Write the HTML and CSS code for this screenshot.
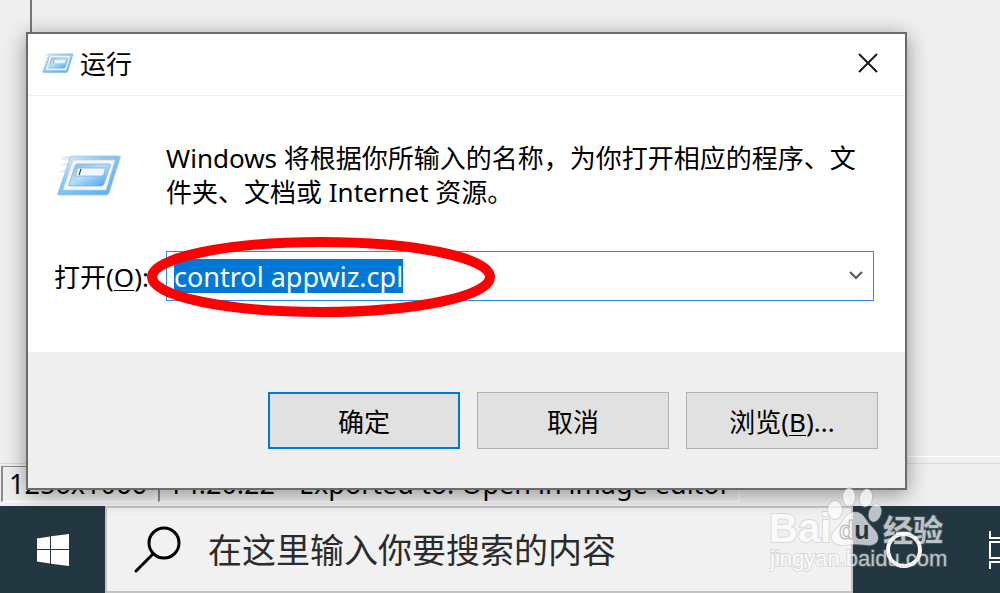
FILE: index.html
```
<!DOCTYPE html>
<html lang="zh-CN">
<head>
    <meta charset="UTF-8">
    <meta name="viewport" content="width=device-width, initial-scale=1.0">
    <title>运行</title>
    <link rel="stylesheet" href="styles.css">
</head>
<body>
    <svg class="defs" width="0" height="0" aria-hidden="true">
        <defs>
            <linearGradient id="frame" x1="0" y1="0" x2="1" y2="1">
                <stop offset="0" stop-color="#e3f1fc"/>
                <stop offset=".4" stop-color="#8ac5f3"/>
                <stop offset="1" stop-color="#5aaaf0"/>
            </linearGradient>
            <linearGradient id="panel" x1="0" y1="0" x2="1" y2="1">
                <stop offset="0" stop-color="#84b6e2"/>
                <stop offset=".45" stop-color="#b5def9"/>
                <stop offset="1" stop-color="#3d9fec"/>
            </linearGradient>
            <linearGradient id="trail" x1="0" y1="0" x2="1" y2="0">
                <stop offset="0" stop-color="#c4e0f8" stop-opacity="0"/>
                <stop offset="1" stop-color="#b4d8f5"/>
            </linearGradient>
            <symbol id="run" viewBox="0 0 66 46">
                <path fill="url(#trail)" d="M5 4h16l-2 4H5zM4 11h11l-1 3H4zM2 18h11l-1 3H2zM0 25h10l-1 3H0zM1 32h7l-1 3H1zM0 38h5l-1 3H0z"/>
                <path fill="url(#frame)" stroke="#9cc4e6" stroke-width=".8" d="M16 4h47q2 0 1 2L53 41q-1 2-3 2H3q-2 0-1-2L14 6q1-2 2-2z"/>
                <path fill="#f3f5f7" stroke="#c6d8e8" stroke-width=".7" d="M17 8h42L50 38H7z"/>
                <path fill="url(#panel)" stroke="#84b4de" stroke-width=".8" d="M21 12h32q2 0 1 2l-6 18q-1 2-3 2H14q-2 0-1-2l6-18q1-2 2-2z"/>
                <path fill="#eef8fe" stroke="#8eb2cc" stroke-width=".8" d="M23 16h25q2 0 1 2l-1 4q-1 2-3 2H21q-2 0-1-2l1-4q0-2 2-2z"/>
                <path stroke="#444" stroke-width="1.200" d="M25 17l-2 6"/>
            </symbol>
        </defs>
    </svg>

    <main class="desktop">
        <div class="app-window">
            <div class="app-canvas"></div>
            <div class="status-bar">
                <span class="status-cell size">1256x1066</span>
                <span class="status-cell"><span>14:20:22</span><span>Exported to: Open in image editor</span></span>
            </div>
        </div>

        <section class="dialog" role="dialog" aria-labelledby="run-title">
            <header class="title-bar">
                <svg class="title-icon" aria-hidden="true"><use href="#run"/></svg>
                <h1 id="run-title">运行</h1>
                <button class="close" aria-label="关闭">
                    <svg width="22" height="22" viewBox="0 0 22 22"><path d="M2 2l18 18M20 2L2 20"/></svg>
                </button>
            </header>
            <div class="dialog-body">
                <svg class="run-icon" aria-hidden="true"><use href="#run"/></svg>
                <p>Windows 将根据你所输入的名称，为你打开相应的程序、文件夹、文档或 Internet 资源。</p>
                <label for="command">打开(<u>O</u>):</label>
                <div class="combo">
                    <input id="command" type="text" value="control appwiz.cpl" size="17">
                    <button class="drop" aria-label="展开">
                        <svg width="16" height="10" viewBox="0 0 16 10"><path d="M2 1l6 6 6-6"/></svg>
                    </button>
                    <svg class="marker" viewBox="0 0 350 80" aria-hidden="true"><ellipse cx="175" cy="40" rx="169" ry="35"/></svg>
                </div>
            </div>
            <footer class="dialog-footer">
                <button class="btn default">确定</button>
                <button class="btn">取消</button>
                <button class="btn">浏览(<u>B</u>)...</button>
            </footer>
        </section>
    </main>

    <nav class="taskbar">
        <button class="start" aria-label="开始">
            <svg width="32" height="32" viewBox="0 0 32 32"><path d="M0 4.500l13-2V15H0zM14 2.300L32 0v15H14zM0 16h13v13.500l-13-2zM14 16h18v16l-18-2.300z"/></svg>
        </button>
        <div class="search">
            <svg width="48" height="48" viewBox="0 0 48 48" aria-hidden="true"><circle cx="31" cy="17" r="15"/><path d="M20 28L3 45"/></svg>
            <input type="text" aria-label="搜索" placeholder="在这里输入你要搜索的内容">
        </div>
        <div class="tray">
            <button class="cortana" aria-label="Cortana">
                <svg width="38" height="38" viewBox="0 0 38 38"><circle cx="19" cy="19" r="16"/></svg>
            </button>
            <button class="task-view" aria-label="任务视图">
                <svg width="36" height="38" viewBox="0 0 36 38"><path d="M1 0v7h26V0M1 11h26v16H1zM1 38v-7h26v7M34 0v38"/></svg>
            </button>
        </div>
    </nav>

    <svg class="watermark" width="184" height="94" viewBox="0 0 184 94">
        <g class="mark">
            <text class="brand" x="0" y="57">Bai</text>
            <ellipse cx="66" cy="25" rx="7" ry="9"/>
            <ellipse cx="80" cy="12" rx="6" ry="9"/>
            <ellipse cx="97" cy="13" rx="6" ry="9" transform="rotate(12 97 13)"/>
            <ellipse cx="106" cy="28" rx="6" ry="9" transform="rotate(18 106 28)"/>
            <path d="M86 27c8 0 10 7 15 13 5 5 8 8 8 13 0 6-6 8-12 7-8-1-15-1-22 0-7 0-12-2-12-8 0-5 4-7 8-12 5-6 7-13 15-13z"/>
            <text class="cn" x="114" y="56">经验</text>
            <text class="site" x="1" y="81">jingyan.baidu.com</text>
        </g>
        <text class="du" x="70" y="54"><tspan class="d">d</tspan><tspan class="u">u</tspan></text>
    </svg>
</body>
</html>
```
FILE: styles.css
```
* {
    box-sizing: border-box;
}

body {
    margin: 0;
    min-height: 100vh;
    display: flex;
    flex-direction: column;
    position: relative;
    overflow: hidden;
    background-color: #efefef;
    color: #000;
    font-family: "Noto Sans", "Noto Sans CJK SC", sans-serif;
    font-size: 26px;
}

button,
input {
    margin: 0;
    padding: 0;
    border: 0;
    background: none;
    color: inherit;
    font: inherit;
}

svg {
    display: block;
    flex: none;
}

u {
    text-decoration-thickness: 1px;
    text-underline-offset: 3px;
}

.defs {
    position: absolute;
}

.desktop {
    flex: 1;
    display: flex;
    position: relative;
}

/* window behind the dialog */
.app-window {
    flex: 1;
    display: flex;
    flex-direction: column;
}

.app-canvas {
    flex: 1;
    margin-left: 30px;
    border-left: 2px solid #777;
    border-bottom: 1px solid #fff;
}

.status-bar {
    display: flex;
    gap: 2px;
    margin-top: 6px;
    padding: 2px 1px 4px;
    border-top: 1px solid #dadada;
    font-size: 27px;
    line-height: 34px;
    white-space: nowrap;
}

.status-cell {
    display: flex;
    gap: 24px;
    padding: 0 8px;
    border: 1px solid #8a8a8a;
    border-left-width: 2px;
    border-right-color: #fff;
    border-bottom-color: #fff;
}

.status-cell.size {
    padding: 0 8px 0 6px;
}

/* run dialog */
.dialog {
    position: absolute;
    top: 32px;
    left: 26px;
    right: 93px;
    border: 2px solid #6b6b6b;
    background-color: #fff;
    box-shadow: 0 4px 20px rgba(0, 0, 0, 0.4);
}

.title-bar {
    display: flex;
    align-items: center;
    gap: 6px;
    height: 62px;
    padding: 0 26px 4px 14px;
    border-bottom: 1px solid #f0f0f0;
}

.title-icon {
    width: 32px;
    height: 24px;
}

.title-bar h1 {
    flex: 1;
    margin: 0;
    font-size: 26px;
    font-weight: 400;
}

.close svg {
    fill: none;
    stroke: #1a1a1a;
    stroke-width: 2;
}

.dialog-body {
    display: grid;
    grid-template-columns: 112px 1fr;
    row-gap: 42px;
    align-items: center;
    padding: 45px 31px 51px 26px;
}

.run-icon {
    width: 66px;
    height: 46px;
    margin-left: 2px;
}

.dialog-body p {
    margin: 0;
    line-height: 34px;
}

.dialog-body label {
    white-space: nowrap;
}

.combo {
    display: flex;
    align-items: center;
    justify-content: space-between;
    position: relative;
    height: 50px;
    padding: 0 9px 0 7px;
    border: 1px solid #2e8fe0;
}

.combo input {
    field-sizing: content;
    height: 34px;
    background-color: #0078d7;
    color: #fff;
    font-size: 27px;
    outline: none;
}

.drop svg {
    fill: none;
    stroke: #555;
    stroke-width: 2;
}

.marker {
    position: absolute;
    top: -15px;
    left: -21px;
    width: 350px;
    height: 80px;
    fill: none;
    stroke: #f00;
    stroke-width: 10;
    pointer-events: none;
}

.dialog-footer {
    display: flex;
    justify-content: flex-end;
    gap: 17px;
    padding: 40px 27px 39px;
    background-color: #efefef;
}

.btn {
    width: 192px;
    height: 57px;
    border: 1px solid #b0b0b0;
    background-color: #e1e1e1;
}

.btn.default {
    border: 2px solid #0078d7;
}

/* taskbar */
.taskbar {
    display: flex;
    height: 87px;
    background-color: #22373f;
}

.start {
    display: flex;
    align-items: center;
    justify-content: center;
    width: 105px;
    fill: #fff;
}

.search {
    flex: 1;
    display: flex;
    align-items: center;
    gap: 27px;
    padding-left: 26px;
    border: 2px solid #c4c4c4;
    background-color: #f1f1f1;
}

.search svg {
    fill: none;
    stroke: #000;
    stroke-width: 3;
    stroke-linecap: round;
}

.search input {
    flex: 1;
    min-width: 0;
    height: 56px;
    font-size: 34px;
}

.search input::placeholder {
    color: #2b2b2b;
}

.tray {
    display: flex;
    align-items: center;
    width: 147px;
    padding-left: 32px;
    overflow: hidden;
    fill: none;
    stroke: #fff;
}

.cortana {
    margin-right: 66px;
    stroke-width: 4;
}

.task-view {
    stroke-width: 2;
}

.watermark {
    position: absolute;
    right: 47px;
    bottom: 14px;
    pointer-events: none;
}

.mark {
    fill: #fff;
    stroke: #999;
    stroke-opacity: 0.4;
    stroke-width: 2;
    paint-order: stroke;
    opacity: 0.7;
}

.brand {
    font: bold 40px "Liberation Sans", sans-serif;
}

.cn {
    font: bold 30px "Noto Sans CJK SC", sans-serif;
}

.site {
    font: 22px "Liberation Sans", sans-serif;
}

.du {
    font: bold 25px "Liberation Sans", sans-serif;
}

.d {
    fill: #f1f1f1;
    stroke: #b5b5b5;
}

.u {
    fill: #22373f;
}
```
